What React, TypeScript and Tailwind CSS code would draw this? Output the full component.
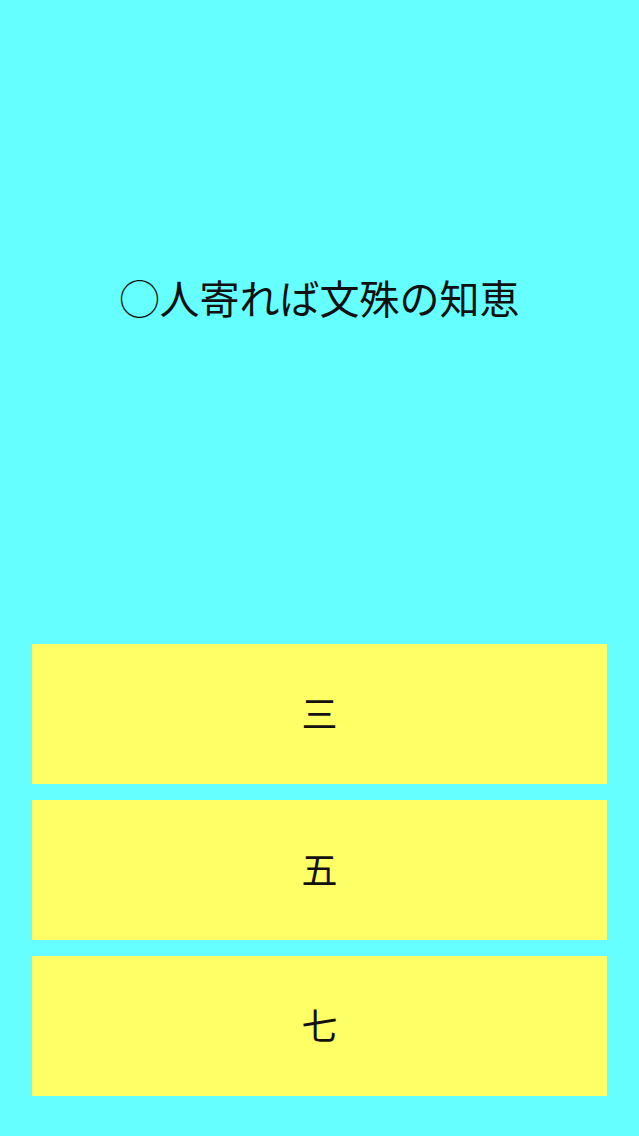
export default function App() {
  const options = ["三", "五", "七"];
  return (
    <div
      className="w-[639px] h-[1136px] bg-[#66ffff] flex flex-col text-[#111111]"
      style={{ fontFamily: '"Noto Sans CJK JP", "Noto Sans", sans-serif' }}
    >
      <div className="h-[594px] flex items-center justify-center">
        <div className="text-[40px] leading-none tracking-[0px]">◯人寄れば文殊の知恵</div>
      </div>
      <div className="mt-[50px] px-[32px] flex flex-col gap-[16px]">
        {options.map((o) => (
          <div
            key={o}
            className="h-[140px] pb-[4px] bg-[#ffff66] flex items-center justify-center text-[36px] leading-none"
          >
            {o}
          </div>
        ))}
      </div>
    </div>
  );
}
